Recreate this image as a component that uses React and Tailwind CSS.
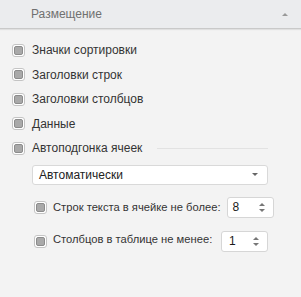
import React from 'react'

const Box = () => (
  <span className="flex h-[13px] w-[13px] shrink-0 items-center justify-center rounded-[3px] border border-[#c4c4c4] bg-white">
    <span className="h-[9px] w-[9px] rounded-[2px] border border-[#8c8c8c] bg-[#a9a9a9]" />
  </span>
)

const Check = ({ label, children }) => (
  <div className="flex h-[24.5px] items-center gap-[7px]">
    <Box />
    <span className="whitespace-nowrap">{label}</span>
    {children}
  </div>
)

const Spin = ({ value, className = '' }) => (
  <div className={`flex h-[21px] w-[47px] shrink-0 items-center justify-between rounded-[3px] border border-[#d6d6d6] bg-white pl-[5px] pr-[8px] text-[12px] ${className}`}>
    <span className="text-[#1a1a1a]">{value}</span>
    <span className="flex flex-col items-center gap-[3px]">
      <span className="h-0 w-0 border-x-[3px] border-b-[3px] border-x-transparent border-b-[#777]" />
      <span className="h-0 w-0 border-x-[3px] border-t-[3px] border-x-transparent border-t-[#777]" />
    </span>
  </div>
)

export default function App() {
  return (
    <div className="h-[297px] w-[301px] bg-[#f3f3f3] text-[12px] text-[#333] font-['Liberation_Sans',sans-serif]">
      <div className="flex h-[29px] items-center justify-between border-b border-[#c9c9c9] bg-[#ebecee] pl-[31px] pr-[13px] shadow-[0_1px_1px_rgba(0,0,0,0.08)]">
        <span className="text-[#707070]">Размещение</span>
        <span className="h-0 w-0 border-x-[3px] border-b-[3px] border-x-transparent border-b-[#999]" />
      </div>
      <div className="pl-[12px] pt-[9px]">
        <Check label="Значки сортировки" />
        <Check label="Заголовки строк" />
        <Check label="Заголовки столбцов" />
        <Check label="Данные" />
        <Check label="Автоподгонка ячеек">
          <span className="ml-[8px] mr-[33px] h-px flex-1 bg-[#e2e2e2]" />
        </Check>
        <div className="ml-[20px] mr-[33px] mt-[4px] flex h-[20px] items-center justify-between rounded-[3px] border border-[#d9d9d9] bg-white pl-[6px] pr-[9px] text-[#222]">
          <span>Автоматически</span>
          <span className="h-0 w-0 border-x-[3.5px] border-t-[3.5px] border-x-transparent border-t-[#666]" />
        </div>
        <div className="ml-[22px] mr-[33px] mt-[12px] flex flex-col gap-[13px] text-[11.2px]">
          <div className="flex items-center gap-[6px]">
            <Box />
            <span className="whitespace-nowrap">Строк текста в ячейке не более:</span>
            <Spin value="8" className="ml-auto" />
          </div>
          <div className="flex items-center gap-[6px]">
            <Box />
            <span className="-mt-[3px] whitespace-nowrap">Столбцов в таблице не менее:</span>
            <Spin value="1" className="ml-auto pl-[7px]" />
          </div>
        </div>
      </div>
    </div>
  )
}
